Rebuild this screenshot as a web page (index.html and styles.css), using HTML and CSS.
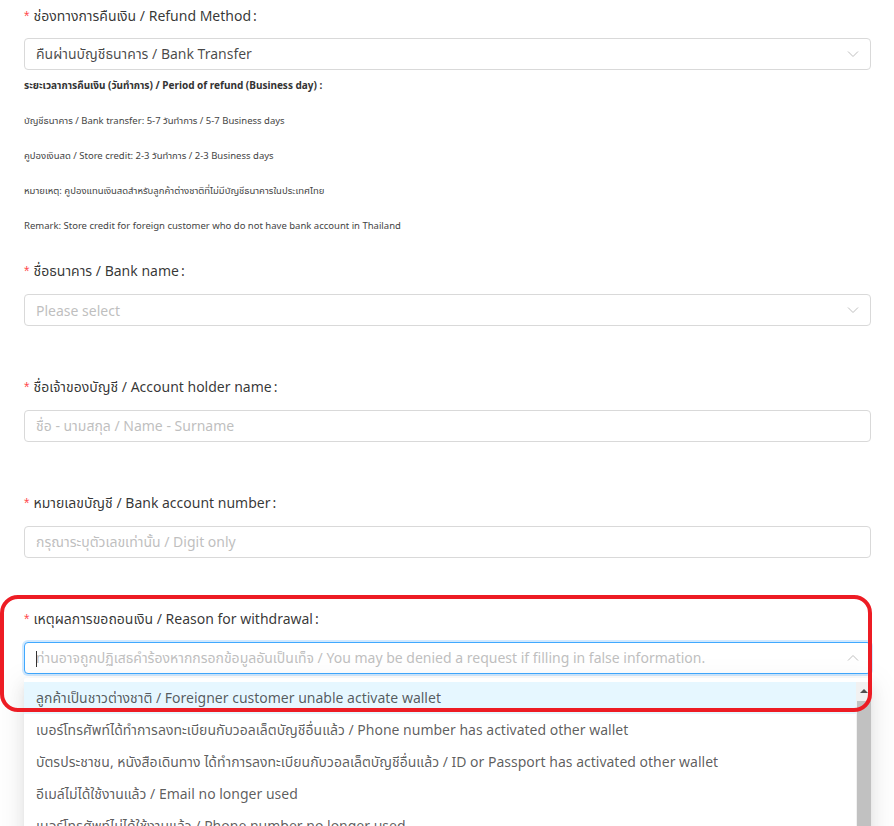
FILE: index.html
```html
<!DOCTYPE html>
<html lang="th">
<head>
<meta charset="utf-8">
<title>Refund form</title>
<link rel="stylesheet" href="styles.css">
</head>
<body>
<div class="form">
  <div class="item item-first">
    <div class="label"><span class="req">*</span>ช่องทางการคืนเงิน / Refund Method<span class="colon">:</span></div>
    <div class="select">
      <span class="value">คืนผ่านบัญชีธนาคาร / Bank Transfer</span>
      <svg class="chev" width="12" height="12" viewBox="0 0 12 12"><path d="M1 3.5 L6 8.5 L11 3.5" fill="none" stroke="#bfbfbf" stroke-width="1"/></svg>
    </div>
  </div>

  <div class="period">
    <p class="period-title">ระยะเวลาการคืนเงิน (วันทำการ) / Period of refund (Business day) :</p>
    <p>บัญชีธนาคาร / Bank transfer: 5-7 วันทำการ / 5-7 Business days</p>
    <p>คูปองเงินสด / Store credit: 2-3 วันทำการ / 2-3 Business days</p>
    <p>หมายเหตุ: คูปองแทนเงินสดสำหรับลูกค้าต่างชาติที่ไม่มีบัญชีธนาคารในประเทศไทย</p>
    <p>Remark: Store credit for foreign customer who do not have bank account in Thailand</p>
  </div>

  <div class="item">
    <div class="label"><span class="req">*</span>ชื่อธนาคาร / Bank name<span class="colon">:</span></div>
    <div class="select">
      <span class="placeholder">Please select</span>
      <svg class="chev" width="12" height="12" viewBox="0 0 12 12"><path d="M1 3.5 L6 8.5 L11 3.5" fill="none" stroke="#bfbfbf" stroke-width="1"/></svg>
    </div>
  </div>

  <div class="item">
    <div class="label"><span class="req">*</span>ชื่อเจ้าของบัญชี / Account holder name<span class="colon">:</span></div>
    <div class="input"><span class="placeholder">ชื่อ - นามสกุล / Name - Surname</span></div>
  </div>

  <div class="item">
    <div class="label"><span class="req">*</span>หมายเลขบัญชี / Bank account number<span class="colon">:</span></div>
    <div class="input"><span class="placeholder">กรุณาระบุตัวเลขเท่านั้น / Digit only</span></div>
  </div>

  <div class="item item-reason">
    <div class="label"><span class="req">*</span>เหตุผลการขอถอนเงิน / Reason for withdrawal<span class="colon">:</span></div>
    <div class="select focused">
      <span class="caret"></span>
      <span class="placeholder">ท่านอาจถูกปฏิเสธคำร้องหากกรอกข้อมูลอันเป็นเท็จ / You may be denied a request if filling in false information.</span>
      <svg class="chev" width="12" height="12" viewBox="0 0 12 12"><path d="M1 8.5 L6 3.5 L11 8.5" fill="none" stroke="#bfbfbf" stroke-width="1"/></svg>
    </div>
    <div class="dropdown">
      <div class="list">
        <div class="option active">ลูกค้าเป็นชาวต่างชาติ / Foreigner customer unable activate wallet</div>
        <div class="option">เบอร์โทรศัพท์ได้ทำการลงทะเบียนกับวอลเล็ตบัญชีอื่นแล้ว / Phone number has activated other wallet</div>
        <div class="option">บัตรประชาชน, หนังสือเดินทาง ได้ทำการลงทะเบียนกับวอลเล็ตบัญชีอื่นแล้ว / ID or Passport has activated other wallet</div>
        <div class="option">อีเมล์ไม่ได้ใช้งานแล้ว / Email no longer used</div>
        <div class="option">เบอร์โทรศัพท์ไม่ได้ใช้งานแล้ว / Phone number no longer used</div>
        <div class="option">อื่นๆ / Others</div>
      </div>
      <div class="sbar">
        <div class="sbar-up"></div>
        <div class="sbar-thumb"></div>
      </div>
    </div>
    <div class="highlight"></div>
  </div>
</div>
</body>
</html>
```

FILE: styles.css
```css
html, body {
  margin: 0;
  padding: 0;
  background: #ffffff;
  overflow: hidden;
  height: 826px;
}
body {
  font-family: "Segoe UI", "Noto Sans", "Noto Sans Thai", "Open Sans", Tahoma, sans-serif;
  font-size: 14px;
  color: rgba(0, 0, 0, 0.85);
}
.form {
  padding: 5px 23px 0 24px;
}
.item {
  margin-top: 50px;
}
.item-first {
  margin-top: 0;
}
.period + .item {
  margin-top: 27px;
}
.label {
  line-height: 22px;
  height: 22px;
  margin-bottom: 12px;
  color: rgba(0, 0, 0, 0.8);
  white-space: nowrap;
}
.item-first .label {
  margin-bottom: 11px;
}
.req {
  color: #ff4d4f;
  font-family: SimSun, "Liberation Sans", sans-serif;
  font-size: 14px;
  margin-right: 4px;
}
.colon {
  margin-left: 2px;
}
.select, .input {
  box-sizing: border-box;
  height: 32px;
  border: 1px solid #d9d9d9;
  border-radius: 4px;
  padding: 0 11px;
  display: flex;
  align-items: center;
  background: #fff;
  position: relative;
}
.value {
  flex: 1;
  white-space: nowrap;
  overflow: hidden;
  color: rgba(0, 0, 0, 0.72);
}
.placeholder {
  flex: 1;
  color: #bfbfbf;
  white-space: nowrap;
  overflow: hidden;
}
.chev {
  flex: none;
  margin-left: 8px;
}
.focused {
  border-color: #40a9ff;
  box-shadow: 0 0 0 2px rgba(24, 144, 255, 0.2);
}
.caret {
  position: absolute;
  left: 11px;
  top: 8px;
  width: 1px;
  height: 16px;
  background: #333;
}
.period {
  margin-top: 8px;
  font-size: 9.5px;
  color: #444;
}
.period p {
  margin: 0;
  line-height: 15px;
  white-space: nowrap;
}
.period p + p {
  margin-top: 20px;
}
.period .period-title {
  font-weight: 700;
  font-size: 10px;
  color: #333;
}
.item-reason {
  position: relative;
}
.dropdown {
  position: absolute;
  left: 0;
  right: 0;
  top: 70px;
  padding: 4px 0;
  background: #fff;
  border-radius: 2px;
  box-shadow: 0 3px 6px -4px rgba(0, 0, 0, 0.12), 0 6px 16px 0 rgba(0, 0, 0, 0.08), 0 9px 28px 8px rgba(0, 0, 0, 0.05);
  display: flex;
}
.list {
  flex: 1;
}
.option {
  height: 32px;
  line-height: 32px;
  padding: 0 12px;
  color: rgba(0, 0, 0, 0.65);
  white-space: nowrap;
}
.option.active {
  background: #e6f7ff;
}
.sbar {
  width: 15px;
  flex: none;
  background: #f1f1f1;
  display: flex;
  flex-direction: column;
  align-items: center;
}
.sbar-up {
  width: 0;
  height: 0;
  margin-top: 7px;
  border-left: 4px solid transparent;
  border-right: 4px solid transparent;
  border-bottom: 4px solid #505050;
}
.sbar-thumb {
  margin-top: 8px;
  width: 14px;
  flex: 1;
  background: #c1c1c1;
}
.highlight {
  position: absolute;
  left: -24px;
  top: -13px;
  width: 872px;
  height: 117px;
  box-sizing: border-box;
  border: 4px solid #ed1c24;
  border-radius: 18px;
  pointer-events: none;
}
```
